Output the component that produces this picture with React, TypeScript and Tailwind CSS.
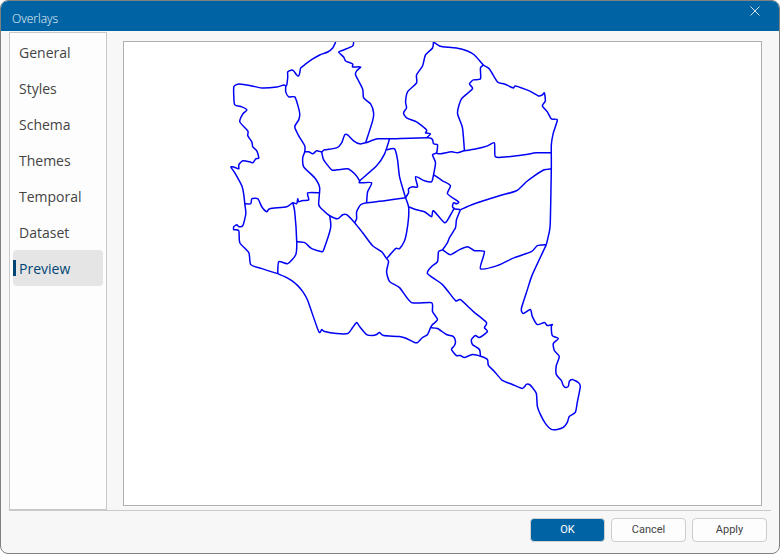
import { useState, type FC } from "react";
import cx from "clsx";

const pages = [
  "General",
  "Styles",
  "Schema",
  "Themes",
  "Temporal",
  "Dataset",
  "Preview",
];

// region boundaries, each shared border is listed once
const boundaries = [
  "336,42 333,48 328,52 320,55 313,59 306,64 301,68 300,73 299,76 297,75 294,71 292,70 288,72 288,77 287,85 286,86",
  "286,86 284,85 277,87 262,88 252,86 240,84 236,85 234,87 234,97 235,105 242,107 247,110 243,114 240,122 248,131 248,136 252,142 253,147 257,151 259,158 256,159 253,163 250,162 243,161 239,165 239,169 236,168 231,167 235,173 242,186 244,195 245,204 246,214 243,226 239,227 237,225 234,227 234,230 239,231 240,243 249,253 251,265 262,269 278,274",
  "278,274 285,277 292,281 298,286 303,292 308,301 319,332 322,330 325,332 337,334 348,334 353,328 357,323 360,327 367,335 373,336 377,335 380,333 384,336 400,337 407,339 415,343 418,343 423,338 428,335 431,328",
  "431,328 438,329 447,335 454,337 456,342 455,346 452,350 457,356 461,356 465,358 473,355 482,357 488,360 489,366 495,372 503,381 513,385 523,389 527,385 530,385 533,388 537,394 538,407 541,415 546,424 552,430 558,430 564,428 568,423 570,417 576,413 578,403 581,387 579,383 573,380 570,382 569,387 566,388 564,386 562,381 557,375 557,366 560,357 555,351 554,344 559,339 553,336 552,327 553,325 548,326 545,323 538,325 533,317 531,310 524,314 522,309 528,290 533,275 547,245",
  "547,245 550,232 551,222 552,168 552,145 554,133 558,120 552,119 548,112 543,106 546,101 545,93 543,95 539,96 530,91 516,86 514,88 505,84 498,82 490,69 484,65 475,55 468,51 457,48 445,47 440,46 434,42",
  "354,42 353,46 344,50 339,52 344,57 346,61 353,64 353,67 361,67 357,71 356,75 363,89 364,98 371,104 374,113 373,121 366,143",
  "434,42 433,48 426,55 423,66 417,75 417,83 408,92 406,102 407,108 404,113 407,118 417,122 427,130 426,133 431,134 427,138",
  "305,152 309,152 313,154 317,151 322,152 325,150 337,148 342,143 345,135 348,135 354,141 360,144 366,143 378,139 390,139 428,138 433,140 434,144 438,145 437,153 433,155 436,163 434,175 432,182 425,181 416,177 418,187 413,187 409,189 409,193 406,198",
  "437,153 440,154 452,152 458,153 465,151 477,149 488,146 495,143 496,157 508,157 525,155 537,153 552,153",
  "484,65 481,68 481,79 474,80 470,84 473,89 462,99 458,113 463,128 465,151",
  "286,86 286,92 289,97 295,97 298,105 300,114 299,120 295,127 299,136 305,146 305,152 303,158 304,167 315,178 320,188 319,205 324,211 330,216 338,219 343,215 347,215 355,223 363,233 373,246 382,252 387,259",
  "322,152 324,160 332,170 338,170 348,169 355,174 360,181 360,183 372,183 368,192 367,203",
  "360,181 377,166 385,154 390,139",
  "387,150 395,149 398,160 400,177 406,198",
  "406,198 385,201 367,203 361,205 357,212 357,219 355,223",
  "406,198 409,207 409,218 407,233 405,241 400,249 396,249 387,259",
  "409,207 417,210 425,212 432,217 434,211 445,223 450,217 455,208",
  "434,175 443,181 451,186 448,194 459,202 457,204 454,203 453,207 455,209 461,210",
  "461,210 475,204 500,196 517,191 527,182 535,176 545,170 552,169",
  "461,210 457,220 456,228 450,238 448,243 443,250 439,252 438,262 432,267 428,274 443,285 456,301 461,300 474,312 487,323 485,328 488,332 480,338 476,336 472,340 473,345 480,350 481,357",
  "443,250 451,255 460,250 468,247 475,251 485,252 481,269 498,266 515,258 532,252 538,246 547,245",
  "387,259 389,262 387,272 390,282 400,288 412,303 432,303 433,312 438,320 433,325 431,328",
  "245,204 251,204 252,199 258,199 262,207 267,212 270,209 287,207 293,203 297,204 298,199 299,202 302,201 309,200 308,193 320,193",
  "293,203 295,212 297,242 296,255 288,264 279,262 278,274",
  "297,242 305,243 312,249 322,252 324,250 331,228 330,216",
];

// cubic segments through every point, slightly rounded at the vertices
const toPath = (points: string): string => {
  const p = points.split(" ").map((pair) => pair.split(",").map(Number));
  let d = `M${p[0][0]},${p[0][1]}`;
  for (let i = 0; i < p.length - 1; i++) {
    const prev = p[i - 1] ?? p[i];
    const from = p[i];
    const to = p[i + 1];
    const next = p[i + 2] ?? to;
    const c1 = [0, 1].map((k) => from[k] + (to[k] - prev[k]) / 9);
    const c2 = [0, 1].map((k) => to[k] - (next[k] - from[k]) / 9);
    d += `C${c1} ${c2} ${to}`;
  }
  return d;
};

const TitleBar: FC = () => (
  <header className="flex h-[30px] items-start justify-between bg-[#0064a4] pl-[11px] pr-[13px] text-[#d3e1eb]">
    <h1 className="pt-[10px] text-xs font-light leading-4 text-[#f0f6fa]">
      Overlays
    </h1>
    <button type="button" aria-label="Close" className="px-1 py-[3px]">
      <svg
        width="14"
        height="14"
        viewBox="0 0 14 14"
        stroke="currentColor"
        fill="none">
        <path d="M2.5 2.5l9 9M11.5 2.5l-9 9" />
      </svg>
    </button>
  </header>
);

const RegionMap: FC = () => (
  <svg
    viewBox="124 42 638 463"
    preserveAspectRatio="xMidYMin meet"
    className="h-full w-full"
    role="img"
    aria-label="Overlay preview"
    fill="none"
    stroke="#0000f5"
    strokeWidth="1.5"
    strokeLinejoin="round">
    {boundaries.map((points) => (
      <path key={points} d={toPath(points)} />
    ))}
  </svg>
);

const App: FC = () => {
  const [active, setActive] = useState("Preview");

  return (
    <div className="flex min-h-screen flex-col overflow-hidden rounded-lg border border-[#808080] bg-[#f7f7f7] font-['Open_Sans',sans-serif] text-[#444]">
      <TitleBar />
      <main className="mx-2 mt-px flex flex-1 border-b border-[#cacaca]">
        <nav className="flex w-[98px] shrink-0 flex-col border border-[#c8c8c8] bg-[#fdfdfd] px-[3px] py-px">
          {pages.map((page) => (
            <button
              key={page}
              type="button"
              onClick={() => setActive(page)}
              className={cx(
                "flex h-9 items-center rounded text-left text-sm",
                page === active && "bg-[#e5e5e5] text-[#004575]"
              )}>
              <span
                className={cx(
                  "mr-[3px] h-4 w-[3px]",
                  page === active && "bg-[#004575]"
                )}
              />
              <span className="pt-0.5">{page}</span>
            </button>
          ))}
        </nav>
        <div className="mb-1 ml-4 mr-[9px] mt-[9px] flex-1 border border-[#b0b0b0] bg-white">
          <RegionMap />
        </div>
      </main>
      <footer className="flex h-[42px] justify-end gap-[6px] pr-3 pt-[7px] font-[Roboto,sans-serif] text-[11px]">
        <button
          type="button"
          className="h-6 w-[75px] rounded border border-[#d0d0d0] bg-[#0064a4] text-white">
          OK
        </button>
        <button
          type="button"
          className="h-6 w-[75px] rounded border border-[#cdcdcd] bg-[#fdfdfd]">
          Cancel
        </button>
        <button
          type="button"
          className="h-6 w-[75px] rounded border border-[#cdcdcd] bg-[#fdfdfd]">
          Apply
        </button>
      </footer>
    </div>
  );
};

export default App;
